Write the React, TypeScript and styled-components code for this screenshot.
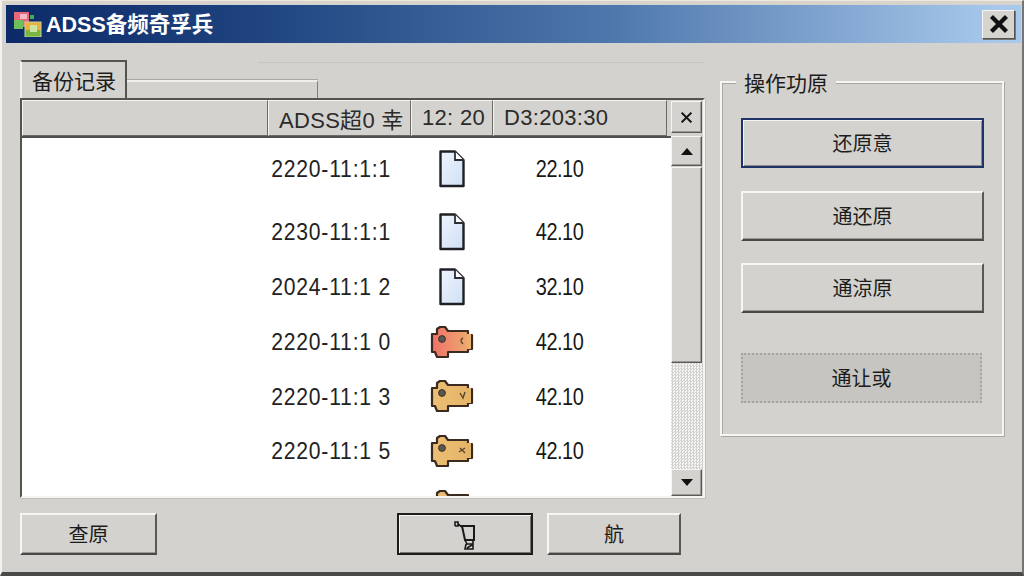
import React from "react";
import styled, { createGlobalStyle, css } from "styled-components";

const FONT = `"Liberation Sans", "Noto Sans CJK SC", sans-serif`;

const Global = createGlobalStyle`
  html, body { margin: 0; padding: 0; height: 100%; overflow: hidden; background: #d4d2ce; }
  #root { height: 100%; }
  * { box-sizing: border-box; }
`;

const Win = styled.div`
  width: 1024px;
  height: 576px;
  display: flex;
  flex-direction: column;
  background: #d4d2ce;
  font-family: ${FONT};
  color: #1c1c1c;
  border-top: 1px solid #eee9df;
  border-left: 2px solid #f4f2ee;
  border-right: 2px solid #77756f;
  border-bottom: 4px solid #4a4a48;
  box-shadow: inset 0 3px 0 #d8d4cc;
`;

const TitleBar = styled.div`
  height: 38px;
  margin: 4px 1px 0 4px;
  flex: none;
  display: flex;
  align-items: center;
  padding: 0 6px 0 7px;
  background: linear-gradient(90deg, #0c2a68 0%, #1f4480 25%, #4f78ad 60%, #a8c9ec 98%);
`;

const TitleText = styled.span`
  margin-left: 4px;
  padding-top: 3px;
  color: #fff;
  font-weight: 700;
  font-size: 21.5px;
  line-height: 1;
  flex: 1;
`;

const CloseBtn = styled.div`
  width: 33px;
  height: 29px;
  background: #d6d4cf;
  display: flex;
  align-items: center;
  justify-content: center;
  border: 1px solid;
  border-color: #f6f6f2 #55534f #55534f #f6f6f2;
  box-shadow: 1px 1px 0 #77756f;
`;

const Content = styled.div`
  flex: 1;
  display: flex;
  padding: 17px 0 0 18px;
`;

const LeftCol = styled.div`
  width: 685px;
  display: flex;
  flex-direction: column;
`;

const TabRow = styled.div`
  position: relative;
  height: 38px;
  display: flex;
  align-items: flex-end;
`;

const FaintLine = styled.div`
  position: absolute;
  left: 238px;
  right: 0;
  top: 2px;
  height: 1px;
  background: #c6c4c0;
`;

const Tab = styled.div`
  width: 107px;
  height: 38px;
  background: #d4d2ce;
  border-top: 2px solid #55534f;
  border-right: 2px solid #55534f;
  border-left: 2px solid #f4f4f0;
  border-top-left-radius: 2px;
  font-size: 21px;
  line-height: 1;
  padding: 9px 0 0 10px;
  white-space: nowrap;
`;

const TabStrip = styled.div`
  width: 191px;
  height: 18px;
  border-top: 2px solid #f0efea;
  border-right: 1px solid #807e7a;
  box-shadow: 0 -1px 0 #a9a7a3;
`;

const ListFrame = styled.div`
  height: 400px;
  display: flex;
  border: 2px solid;
  border-color: #555350 #f5f5f1 #f5f5f1 #555350;
  box-shadow: 1px 1px 0 #c0beba;
`;

const ListMain = styled.div`
  width: 649px;
  display: flex;
  flex-direction: column;
  background: #fff;
  overflow: hidden;
`;

const HeaderRow = styled.div`
  flex: none;
  height: 38px;
  display: flex;
  background: #d4d2ce;
  padding-right: 4px;
  border-bottom: 2px solid #4f4f4d;
`;

const HeaderCell = styled.div<{ $w: number }>`
  width: ${(p) => p.$w}px;
  display: flex;
  align-items: center;
  padding-left: 10px;
  font-size: 22px;
  letter-spacing: 0.3px;
  white-space: nowrap;
  color: #2b2b2b;
  border: 1px solid;
  border-color: #f4f4f0 #6b6966 #6b6966 #f4f4f0;
`;

const Rows = styled.div`
  flex: 1;
  min-height: 0;
  padding-top: 4px;
  overflow: hidden;
`;

const Row = styled.div<{ $h: number }>`
  height: ${(p) => p.$h}px;
  display: grid;
  grid-template-columns: 246px 126px 116px 100px;
  align-items: center;
  justify-items: center;
`;

const CellText = styled.span`
  grid-column: 2;
  font-size: 24px;
  line-height: 1;
  color: #222;
  white-space: nowrap;
  letter-spacing: 0.9px;
  transform: scaleX(0.88);
`;

const SizeText = styled.span`
  grid-column: 4;
  font-size: 24px;
  line-height: 1;
  color: #181818;
  white-space: nowrap;
  letter-spacing: -0.6px;
  transform: scaleX(0.83);
`;

const IconCell = styled.div`
  grid-column: 3;
  display: flex;
  align-items: center;
  justify-content: center;
`;

const ScrollCol = styled.div`
  flex: 1;
  display: flex;
  flex-direction: column;
  background: #d4d2ce;
  padding: 1px 1px 0 0;
`;

const bevel = css`
  background: #d4d2ce;
  border: 1px solid;
  border-color: #f5f5f1 #5c5a57 #5c5a57 #f5f5f1;
  box-shadow: inset -1px -1px 0 #9b9995;
`;

const ScrollClose = styled.div`
  ${bevel};
  height: 32px;
  display: flex;
  align-items: center;
  justify-content: center;
  margin-bottom: 3px;
`;

const ScrollBtn = styled.div<{ $h: number }>`
  ${bevel};
  height: ${(p) => p.$h}px;
  flex: none;
  display: flex;
  align-items: center;
  justify-content: center;
`;

const Arrow = styled.div<{ $down?: boolean }>`
  width: 0;
  height: 0;
  border-left: 6px solid transparent;
  border-right: 6px solid transparent;
  ${(p) => (p.$down ? "border-top: 7px solid #111;" : "border-bottom: 7px solid #111;")}
`;

const Thumb = styled.div`
  ${bevel};
  height: 196px;
  flex: none;
  margin-top: 1px;
`;

const Track = styled.div`
  flex: 1;
  background-color: #f1f1ef;
  background-image: repeating-conic-gradient(#d2d1cd 0 25%, #f6f6f4 0 50%);
  background-size: 3px 3px;
`;

const Footer = styled.div`
  display: flex;
  margin-top: 15px;
`;

const Btn = styled.div<{ $w?: number; $h?: number; $mt?: number; $ml?: number; $variant?: "focus" | "default" | "disabled" }>`
  width: ${(p) => p.$w ?? 243}px;
  height: ${(p) => p.$h ?? 50}px;
  margin-top: ${(p) => p.$mt ?? 0}px;
  margin-left: ${(p) => p.$ml ?? 0}px;
  flex: none;
  display: flex;
  align-items: center;
  justify-content: center;
  padding-top: 2px;
  font-size: 20px;
  line-height: 1;
  color: #1c1c1c;
  background: #d4d2ce;
  border: 2px solid;
  border-color: #f6f6f2 #5a5855 #4a4846 #f6f6f2;
  box-shadow: inset 0 -1px 0 #9b9995;
  ${(p) =>
    p.$variant === "focus" &&
    css`
      border-color: #1f3466;
      box-shadow: inset 1px 1px 0 #f3f3ef, inset -1px -1px 0 #8f8d89;
    `}
  ${(p) =>
    p.$variant === "default" &&
    css`
      border-color: #1d1d1b;
      box-shadow: inset 1px 1px 0 #f3f3ef, inset -1px -1px 0 #77756f;
    `}
  ${(p) =>
    p.$variant === "disabled" &&
    css`
      width: 241px;
      border: 2px dotted #a5a3a0;
      background: #c6c5c2;
      box-shadow: none;
    `}
`;

const Group = styled.div`
  position: relative;
  width: 284px;
  height: 355px;
  margin: 21px 0 0 15px;
  padding: 35px 0 0 19px;
  border: 2px solid #f6f6f2;
  box-shadow: inset 1px 1px 0 #a9a7a3, 1px 1px 0 #a9a7a3;
`;

const Legend = styled.div`
  position: absolute;
  left: 14px;
  top: -10px;
  background: #d4d2ce;
  padding: 0 8px;
  font-size: 21px;
  line-height: 22px;
  white-space: nowrap;
`;

const XIcon = ({ s = 16, w = 3 }: { s?: number; w?: number }) => (
  <svg width={s} height={s} viewBox="0 0 16 16">
    <path d="M2 2 L14 14 M14 2 L2 14" stroke="#111" strokeWidth={w} fill="none" />
  </svg>
);

const AppLogo = () => (
  <svg width="29" height="26" viewBox="0 0 29 26" style={{ flex: "none" }}>
    <rect x="1" y="1" width="15" height="15" fill="#e9657c" />
    <rect x="1" y="9" width="9" height="9" fill="#6fbf5a" />
    <rect x="7" y="3" width="7" height="5" fill="#f3b9c6" />
    <rect x="17" y="4" width="4" height="4" fill="#3fae55" />
    <rect x="12" y="11" width="16" height="15" fill="#e9b23c" />
    <rect x="12" y="19" width="16" height="7" fill="#79b63f" />
    <rect x="17" y="14" width="7" height="7" fill="#cfe3a0" />
    <rect x="12" y="11" width="16" height="15" fill="none" stroke="#c8cfa6" strokeWidth="1" />
  </svg>
);

const DocIcon = ({ id }: { id: number }) => (
  <svg width="28" height="40" viewBox="0 0 28 40">
    <defs>
      <linearGradient id={`doc${id}`} x1="0" y1="0" x2="1" y2="1">
        <stop offset="0" stopColor="#eef4fd" />
        <stop offset="1" stopColor="#cfe0f5" />
      </linearGradient>
    </defs>
    <path d="M2.5 2.5 H17 L25.5 11 V37 H2.5 Z" fill={`url(#doc${id})`} stroke="#1e2024" strokeWidth="2.4" strokeLinejoin="round" />
    <path d="M17 2.5 V11 H25.5" fill="#fff" stroke="#2c2e32" strokeWidth="1.8" />
  </svg>
);

const TagIcon = ({ id, body, end, mark }: { id: number; body: string; end: string; mark: string }) => (
  <svg width="44" height="33" viewBox="0 0 44 33">
    <defs>
      <linearGradient id={`tag${id}`} x1="0" y1="0" x2="1" y2="0">
        <stop offset="0" stopColor={body} />
        <stop offset="1" stopColor={end} />
      </linearGradient>
    </defs>
    <path
      d="M2 8 H7 V3 L10 1 H15 L18 5 H38 V9 H42 V23 H38 V26 H18 V31 H7 L5 26 H2 Z"
      fill={`url(#tag${id})`}
      stroke="#3a2a20"
      strokeWidth="2.2"
      strokeLinejoin="round"
    />
    <rect x="37" y="8" width="4" height="15" fill={end} />
    <circle cx="12" cy="13" r="3.4" fill="#5c5650" stroke="#3c342c" strokeWidth="1" />
    <path d={mark} stroke="#5a4632" strokeWidth="1.4" fill="none" />
  </svg>
);

const CartIcon = () => (
  <svg width="24" height="31" viewBox="0 0 24 31">
    <path d="M2 6 V2 H5 V6 H2 M5 4 L9 7" stroke="#1a1a1a" strokeWidth="1.6" fill="none" />
    <path d="M9 6 H21 V20 H12 Z" stroke="#1a1a1a" strokeWidth="2" fill="none" />
    <path d="M12 20 L14 24 H20 V20 M13 24 L12 29 H20 L20 24 M14 28 L19 25" stroke="#1a1a1a" strokeWidth="1.6" fill="none" />
  </svg>
);

type RowData = { h: number; date: string; size: string; icon: "doc" | "pink" | "tan"; mark?: string };

const rows: RowData[] = [
  { h: 54, date: "2220-11:1:1", size: "22.10", icon: "doc" },
  { h: 71, date: "2230-11:1:1", size: "42.10", icon: "doc" },
  { h: 40, date: "2024-11:1 2", size: "32.10", icon: "doc" },
  { h: 70, date: "2220-11:1 0", size: "42.10", icon: "pink", mark: "M33 12 Q29 14 33 18" },
  { h: 39, date: "2220-11:1 3", size: "42.10", icon: "tan", mark: "M30 13 L33 18 L35 12" },
  { h: 70, date: "2220-11:1 5", size: "42.10", icon: "tan", mark: "M30 13 L35 18 M35 13 L29 17" },
  { h: 40, date: "2220-11:1 5", size: "42.10", icon: "tan", mark: "M30 13 L35 18" },
];

export default function App() {
  return (
    <Win>
      <Global />
      <TitleBar>
        <AppLogo />
        <TitleText>ADSS备频奇孚兵</TitleText>
        <CloseBtn>
          <XIcon s={20} w={3.4} />
        </CloseBtn>
      </TitleBar>
      <Content>
        <LeftCol>
          <TabRow>
            <FaintLine />
            <Tab>备份记录</Tab>
            <TabStrip />
          </TabRow>
          <ListFrame>
            <ListMain>
              <HeaderRow>
                <HeaderCell $w={246} />
                <HeaderCell $w={143}>ADSS超0 幸</HeaderCell>
                <HeaderCell $w={82}>12: 20</HeaderCell>
                <HeaderCell $w={174}>D3:203:30</HeaderCell>
              </HeaderRow>
              <Rows>
                {rows.map((r, i) => (
                  <Row key={i} $h={r.h}>
                    <CellText>{r.date}</CellText>
                    <IconCell>
                      {r.icon === "doc" ? (
                        <DocIcon id={i} />
                      ) : r.icon === "pink" ? (
                        <TagIcon id={i} body="#f07068" end="#ecb070" mark={r.mark!} />
                      ) : (
                        <TagIcon id={i} body="#ecbf74" end="#e4b468" mark={r.mark!} />
                      )}
                    </IconCell>
                    <SizeText>{r.size}</SizeText>
                  </Row>
                ))}
              </Rows>
            </ListMain>
            <ScrollCol>
              <ScrollClose>
                <XIcon s={13} w={2.6} />
              </ScrollClose>
              <ScrollBtn $h={30}>
                <Arrow />
              </ScrollBtn>
              <Thumb />
              <Track />
              <ScrollBtn $h={27}>
                <Arrow $down />
              </ScrollBtn>
            </ScrollCol>
          </ListFrame>
          <Footer>
            <Btn $w={137} $h={42}>查原</Btn>
            <Btn $w={136} $h={42} $ml={240} $variant="default">
              <CartIcon />
            </Btn>
            <Btn $w={134} $h={42} $ml={14}>航</Btn>
          </Footer>
        </LeftCol>
        <Group>
          <Legend>操作功原</Legend>
          <Btn $variant="focus">还原意</Btn>
          <Btn $mt={23}>通还原</Btn>
          <Btn $mt={22}>通涼原</Btn>
          <Btn $mt={40} $variant="disabled">通让或</Btn>
        </Group>
      </Content>
    </Win>
  );
}
